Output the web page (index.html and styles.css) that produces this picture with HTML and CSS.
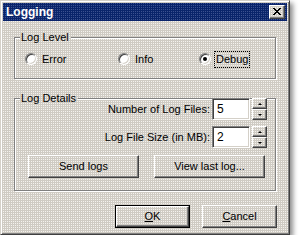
FILE: index.html
```html
<!DOCTYPE html>
<html>
<head>
<meta charset="utf-8">
<link rel="stylesheet" href="styles.css">
</head>
<body>
<div class="window face">
  <div class="titlebar">
    <span class="title">Logging</span>
    <span class="close face">
      <svg width="8" height="7" viewBox="0 0 8 7"><path d="M0 0h2v1h-2zM6 0h2v1h-2zM1 1h2v1h-2zM5 1h2v1h-2zM2 2h4v1h-4zM3 3h2v1h-2zM2 4h4v1h-4zM1 5h2v1h-2zM5 5h2v1h-2zM0 6h2v1h-2zM6 6h2v1h-2z" fill="#000"/></svg>
    </span>
  </div>
  <div class="content">
    <div class="group level">
      <div class="legend face">Log Level</div>
      <div class="radios">
        <div class="radio"><span class="circle"></span><span class="rtext">Error</span></div>
        <div class="radio"><span class="circle"></span><span class="rtext">Info</span></div>
        <div class="radio"><span class="circle checked"></span><span class="rtext focus">Debug</span></div>
      </div>
    </div>
    <div class="group details">
      <div class="legend face">Log Details</div>
      <div class="fields">
        <span class="flabel">Number of Log Files:</span>
        <span class="input">5</span>
        <span class="spin"><span class="sbtn face"><span class="up"></span></span><span class="sbtn face"><span class="down"></span></span></span>
        <span class="flabel">Log File Size (in MB):</span>
        <span class="input">2</span>
        <span class="spin"><span class="sbtn face"><span class="up"></span></span><span class="sbtn face"><span class="down"></span></span></span>
      </div>
      <div class="actions">
        <span class="btn face">Send logs</span>
        <span class="btn face">View last log...</span>
      </div>
    </div>
    <div class="footer">
      <span class="btn face default"><span class="btn-in"><u>O</u>K</span></span>
      <span class="btn face"><u>C</u>ancel</span>
    </div>
  </div>
</div>
</body>
</html>
```
FILE: styles.css
```css
html, body {
  margin: 0;
  padding: 0;
  background: #ffffff;
}
body {
  font-family: "Liberation Sans", Arial, sans-serif;
  font-size: 11px;
  line-height: 13px;
  color: #000;
}
.face {
  background-color: #cfcbc3;
  background-image: conic-gradient(from 90deg at 1px 1px, #f4f2ee 25%, transparent 0);
  background-size: 2px 2px;
  background-attachment: fixed;
}
.window {
  box-sizing: border-box;
  width: 290px;
  height: 235px;
  border: 1px solid;
  border-color: #d4d0c8 #404040 #404040 #d4d0c8;
  box-shadow: inset 1px 1px #fff, inset -1px -1px #808080, 3px 3px 5px rgba(0,0,0,0.45);
  padding: 2px;
  display: flex;
  flex-direction: column;
}
.titlebar {
  height: 18px;
  display: flex;
  align-items: center;
  justify-content: space-between;
  padding: 0 2px 0 3px;
  background-color: #0a246a;
  background-image: conic-gradient(from 90deg at 1px 1px, #3c5190 25%, transparent 0);
  background-size: 2px 2px;
  background-attachment: fixed;
}
.title {
  color: #fff;
  font-weight: bold;
  font-size: 12px;
}
.close {
  box-sizing: border-box;
  width: 16px;
  height: 14px;
  border: 1px solid;
  border-color: #fff #404040 #404040 #fff;
  box-shadow: inset -1px -1px #808080;
  display: flex;
  align-items: center;
  justify-content: center;
  padding: 0 1px 1px 0;
}
.close svg { display: block; }
.content {
  flex: 1;
  padding: 16px 10px 0 11px;
  display: flex;
  flex-direction: column;
}
.group {
  border: 1px solid #808080;
  box-shadow: inset 1px 1px #fff, 1px 1px #fff;
  width: 262px;
  box-sizing: border-box;
}
.legend {
  width: fit-content;
  margin: -7px 0 0 5px;
  padding: 0 2px 0 1px;
}
.level {
  height: 42px;
}
.radios {
  display: grid;
  grid-template-columns: 93px 81px auto;
  padding: 7px 0 0 10px;
}
.radio {
  display: flex;
  align-items: center;
  height: 16px;
}
.circle {
  box-sizing: border-box;
  width: 12px;
  height: 12px;
  border-radius: 50%;
  border: 1px solid;
  border-color: #808080 #fff #fff #808080;
  box-shadow: inset 1px 1px #404040, inset -1px -1px #d4d0c8;
  background: #fff;
  display: flex;
  align-items: center;
  justify-content: center;
  margin-right: 3px;
}
.circle.checked::after {
  content: "";
  width: 4px;
  height: 4px;
  border-radius: 50%;
  background: #000;
}
.rtext {
  padding: 1px;
  border: 1px solid transparent;
}
.rtext.focus {
  border: 1px dotted #000;
}
.details {
  margin-top: 19px;
  height: 93px;
}
.fields {
  display: grid;
  grid-template-columns: auto 38px 15px;
  align-items: center;
  justify-content: end;
  column-gap: 2px;
  row-gap: 6px;
  padding: 0 8px 0 0;
  margin-top: -7px;
}
.flabel {
  justify-self: end;
  text-align: right;
}
.input {
  box-sizing: border-box;
  height: 22px;
  border: 1px solid;
  border-color: #808080 #fff #fff #808080;
  box-shadow: inset 1px 1px #404040, inset -1px -1px #d4d0c8;
  background: #fff;
  padding: 4px 0 0 4px;
  font-size: 12px;
}
.spin {
  display: flex;
  flex-direction: column;
  justify-content: space-between;
  height: 22px;
}
.sbtn {
  box-sizing: border-box;
  height: 11px;
  border: 1px solid;
  border-color: #fff #404040 #404040 #fff;
  box-shadow: inset -1px -1px #808080;
  display: flex;
  align-items: center;
  justify-content: center;
}
.up, .down {
  width: 0;
  height: 0;
  border-left: 2px solid transparent;
  border-right: 2px solid transparent;
}
.up { border-bottom: 2px solid #000; }
.down { border-top: 2px solid #000; }
.actions {
  display: flex;
  gap: 15px;
  padding: 7px 0 0 13px;
}
.btn {
  box-sizing: border-box;
  width: 111px;
  height: 23px;
  border: 1px solid;
  border-color: #fff #404040 #404040 #fff;
  box-shadow: inset -1px -1px #808080;
  display: flex;
  align-items: center;
  justify-content: center;
}
.footer {
  display: flex;
  justify-content: flex-end;
  gap: 12px;
  margin-top: 14px;
  width: 263px;
}
.footer .btn {
  width: 75px;
}
.btn.default {
  border: 1px solid #000;
  box-shadow: none;
  padding: 0;
  display: block;
}
.btn-in {
  box-sizing: border-box;
  height: 100%;
  display: flex;
  align-items: center;
  justify-content: center;
  border: 1px solid;
  border-color: #fff #404040 #404040 #fff;
  box-shadow: inset -1px -1px #808080;
}
u { text-decoration: underline; }
```
